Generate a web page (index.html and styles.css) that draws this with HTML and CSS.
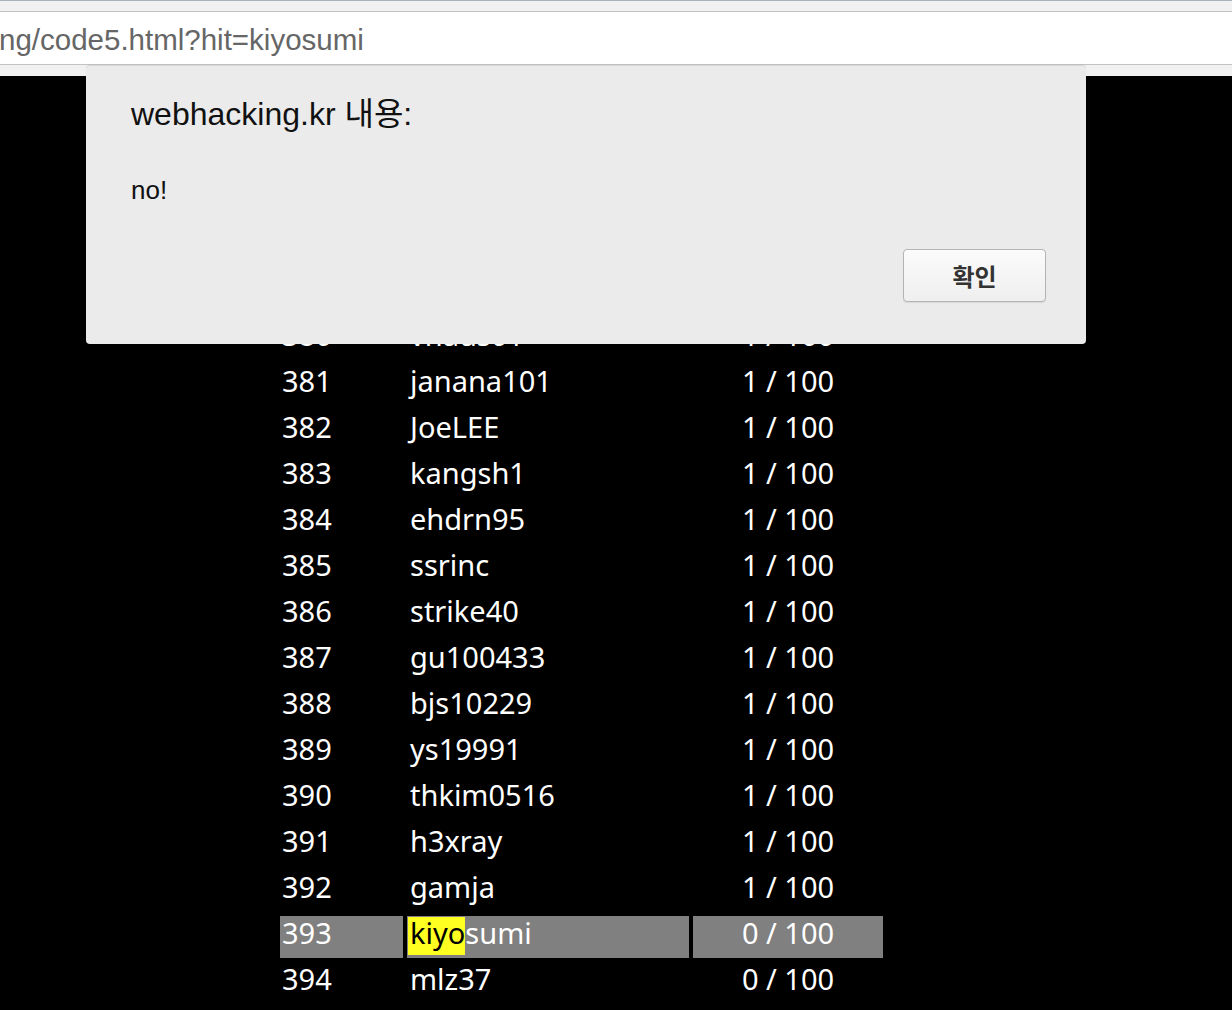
FILE: index.html
```html
<!DOCTYPE html>
<html lang="ko">
<head>
<meta charset="utf-8">
<title>webhacking.kr</title>
<link rel="stylesheet" href="styles.css">
</head>
<body>
<header class="chrome">
  <div class="strip-top"></div>
  <div class="urlbar"><span class="url">ng/code5.html?hit=kiyosumi</span></div>
  <div class="strip-bottom"></div>
</header>
<main class="page">
  <table class="rank">
    <tr><td class="no">380</td><td class="id">vhaus01</td><td class="sc">1 / 100</td></tr>
    <tr><td class="no">381</td><td class="id">janana101</td><td class="sc">1 / 100</td></tr>
    <tr><td class="no">382</td><td class="id">JoeLEE</td><td class="sc">1 / 100</td></tr>
    <tr><td class="no">383</td><td class="id">kangsh1</td><td class="sc">1 / 100</td></tr>
    <tr><td class="no">384</td><td class="id">ehdrn95</td><td class="sc">1 / 100</td></tr>
    <tr><td class="no">385</td><td class="id">ssrinc</td><td class="sc">1 / 100</td></tr>
    <tr><td class="no">386</td><td class="id">strike40</td><td class="sc">1 / 100</td></tr>
    <tr><td class="no">387</td><td class="id">gu100433</td><td class="sc">1 / 100</td></tr>
    <tr><td class="no">388</td><td class="id">bjs10229</td><td class="sc">1 / 100</td></tr>
    <tr><td class="no">389</td><td class="id">ys19991</td><td class="sc">1 / 100</td></tr>
    <tr><td class="no">390</td><td class="id">thkim0516</td><td class="sc">1 / 100</td></tr>
    <tr><td class="no">391</td><td class="id">h3xray</td><td class="sc">1 / 100</td></tr>
    <tr><td class="no">392</td><td class="id">gamja</td><td class="sc">1 / 100</td></tr>
    <tr class="me"><td class="no">393</td><td class="id"><span class="hit">kiyo</span>sumi</td><td class="sc">0 / 100</td></tr>
    <tr><td class="no">394</td><td class="id">mlz37</td><td class="sc">0 / 100</td></tr>
  </table>
</main>
<div class="dialog">
  <h1 class="dlg-title">webhacking.kr 내용:</h1>
  <p class="dlg-msg">no!</p>
  <div class="dlg-actions"><button class="dlg-btn">확인</button></div>
</div>
</body>
</html>
```
FILE: styles.css
```css
html, body {
  margin: 0;
  padding: 0;
  height: 1010px;
  overflow: hidden;
  background: #000;
}
body {
  font-family: "Liberation Sans", "Noto Sans CJK KR", sans-serif;
}
.chrome {
  display: flex;
  flex-direction: column;
  background: #f1f1f1;
}
.strip-top {
  height: 10px;
  border-top: 1px solid #a9b3bd;
  border-bottom: 1px solid #c3c3c3;
  background: #f1f1f1;
}
.urlbar {
  height: 52px;
  background: #fff;
  border-bottom: 1px solid #c2c2c2;
  display: flex;
  align-items: center;
  overflow: hidden;
}
.url {
  font-family: "Liberation Sans", sans-serif;
  font-size: 29.5px;
  color: #666;
  margin-left: -1px;
  white-space: nowrap;
  padding-top: 3px;
}
.strip-bottom {
  height: 11px;
  background: #f1f1f1;
}
.page {
  padding-top: 238px;
  display: flex;
  justify-content: flex-start;
  padding-left: 276px;
}
.rank {
  border-spacing: 4px;
  color: #fff;
  font-family: "Noto Sans", "Open Sans", sans-serif;
  font-size: 29px;
}
.rank td {
  height: 34px;
  padding: 0 2px 8px;
  line-height: 34px;
  white-space: nowrap;
}
.rank .no { width: 119px; }
.rank .id { width: 277px; padding-left: 3px; }
.rank .sc { width: 186px; text-align: center; }
.rank .me td { background: #808080; }
.hit {
  background: linear-gradient(transparent 4px, #ffff22 4px);
  color: #000;
  margin-left: -2px;
  padding-left: 2px;
  padding-bottom: 3px;
}
.dialog {
  position: absolute;
  left: 86px;
  top: 66px;
  width: 1000px;
  height: 278px;
  box-sizing: border-box;
  background: #ebebeb;
  border-radius: 4px;
  box-shadow: 0 -1px 1px rgba(0,0,0,0.12);
  padding: 28px 40px 0 45px;
  display: flex;
  flex-direction: column;
}
.dlg-title {
  margin: 0;
  font-weight: normal;
  font-size: 32px;
  line-height: 40px;
  color: #111;
}
.dlg-msg {
  margin: 41px 0 0;
  font-size: 26px;
  line-height: 30px;
  color: #111;
}
.dlg-actions {
  display: flex;
  justify-content: flex-end;
  margin-top: 44px;
}
.dlg-btn {
  width: 143px;
  height: 53px;
  border: 1px solid #b4b4b4;
  border-radius: 4px;
  background: linear-gradient(#fbfbfb, #efefef);
  box-shadow: 0 1px 1px rgba(0,0,0,0.08);
  font-family: "Noto Sans CJK KR", sans-serif;
  font-weight: bold;
  font-size: 24px;
  color: #333;
}
```
